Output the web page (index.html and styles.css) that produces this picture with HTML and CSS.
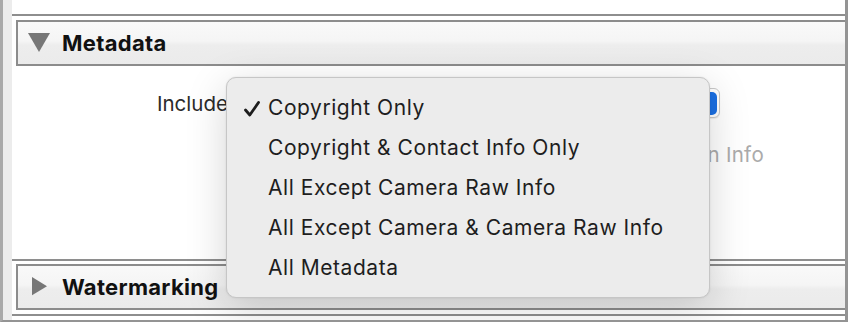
FILE: index.html
```html
<!DOCTYPE html>
<html>
<head>
<meta charset="utf-8">
<link rel="stylesheet" href="styles.css">
</head>
<body>
<div class="frame">
  <div class="content">
    <div class="top-space"></div>
    <div class="rule"></div>
    <div class="section-gap"></div>
    <div class="header">
      <svg class="tri" width="24" height="22" viewBox="0 0 24 22"><polygon points="0,1 22,1 11,20" fill="#777"/></svg>
      <span class="header-title">Metadata</span>
    </div>
    <div class="meta-body">
      <div class="include-row">
        <span class="label">Include:</span>
        <div class="popup">
          <span class="popup-text">Copyright Only</span>
          <span class="stepper"></span>
        </div>
      </div>
      <div class="check-row">
        <span class="check-item"><span class="box"></span><span class="dim">Remove Person Info</span></span>
        <span class="check-item"><span class="box"></span><span class="dim">Remove Location Info</span></span>
      </div>
    </div>
    <div class="rule"></div>
    <div class="section-gap small"></div>
    <div class="header">
      <svg class="tri tri-right" width="24" height="24" viewBox="0 0 24 24"><polygon points="0,0 0,22 18,11" fill="#777"/></svg>
      <span class="header-title">Watermarking</span>
    </div>
    <div class="section-gap"></div>
    <div class="rule"></div>

    <div class="menu">
      <div class="item">
        <svg class="check" width="18" height="18" viewBox="0 0 18 18"><path d="M2.5 10 L6.8 15 L15.5 2.5" fill="none" stroke="#1d1d1d" stroke-width="2.8" stroke-linecap="round" stroke-linejoin="round"/></svg>
        <span class="item-text">Copyright Only</span>
      </div>
      <div class="item"><span class="item-text">Copyright &amp; Contact Info Only</span></div>
      <div class="item"><span class="item-text">All Except Camera Raw Info</span></div>
      <div class="item"><span class="item-text">All Except Camera &amp; Camera Raw Info</span></div>
      <div class="item"><span class="item-text">All Metadata</span></div>
    </div>
  </div>
</div>
</body>
</html>
```

FILE: styles.css
```css
html, body {
  margin: 0;
  padding: 0;
  background: #ffffff;
}

.frame {
  width: 848px;
  height: 322px;
  box-sizing: border-box;
  display: flex;
  background: #ececec;
  border-left: 3px solid #a9a9a9;
  border-right: 3px solid #949494;
  border-bottom: 2px solid #949494;
  padding-left: 9px;
  overflow: hidden;
  font-family: Inter, "Liberation Sans", sans-serif;
}

.content {
  position: relative;
  flex: 1;
  background: #ffffff;
  display: flex;
  flex-direction: column;
}

.top-space {
  height: 14px;
}

.rule {
  height: 2px;
  background: #8e8e8e;
}

.section-gap {
  height: 4px;
}

.section-gap.small {
  height: 3px;
}

.header {
  margin-left: 4px;
  height: 42px;
  border-top: 2px solid #8c8c8c;
  border-bottom: 2px solid #8c8c8c;
  border-left: 2px solid #8c8c8c;
  background: linear-gradient(#f9f9f9 0%, #f5f5f5 45%, #ededed 55%, #ebebeb 100%);
  display: flex;
  align-items: center;
}

.tri {
  margin-left: 10px;
  width: 24px;
  flex: none;
}

.tri-right {
  margin-left: 14px;
  width: 20px;
}

.header-title {
  margin-left: 10px;
  font-weight: 700;
  font-size: 22px;
  letter-spacing: 0.3px;
  color: #111111;
}

.meta-body {
  height: 193px;
  box-sizing: border-box;
  padding-top: 22px;
  display: flex;
  flex-direction: column;
}

.include-row {
  display: flex;
  align-items: center;
  padding-left: 145px;
  height: 30px;
}

.label {
  font-size: 20.5px;
  color: #2b2b2b;
  width: 75px;
  white-space: nowrap;
}

.popup {
  width: 488px;
  height: 30px;
  box-sizing: border-box;
  border: 1px solid #c9c9c9;
  border-radius: 6px;
  background: #ffffff;
  box-shadow: 0 1px 1px rgba(0, 0, 0, 0.08);
  display: flex;
  align-items: center;
  justify-content: space-between;
  padding: 0 2px 0 10px;
}

.popup-text {
  font-size: 20px;
  color: #222;
}

.stepper {
  width: 22px;
  height: 23px;
  border-radius: 5px;
  background: #1a6fe3;
}

.check-row {
  display: flex;
  align-items: center;
  justify-content: space-between;
  width: 532px;
  padding-left: 220px;
  margin-top: 22px;
  height: 28px;
}

.check-item {
  display: flex;
  align-items: center;
  gap: 8px;
}

.box {
  width: 16px;
  height: 16px;
  border: 1px solid #d0d0d0;
  border-radius: 4px;
}

.dim {
  font-size: 20.5px;
  color: #ababab;
  letter-spacing: 0.3px;
  white-space: nowrap;
}

.menu {
  position: absolute;
  left: 214px;
  top: 77px;
  width: 484px;
  height: 221px;
  box-sizing: border-box;
  padding: 10px 0;
  background: #ececec;
  border: 1px solid #c6c6c6;
  border-radius: 10px;
  box-shadow: 0 10px 40px rgba(0, 0, 0, 0.17), 0 0 2px rgba(0, 0, 0, 0.1);
  display: flex;
  flex-direction: column;
}

.item {
  height: 40px;
  display: flex;
  align-items: center;
  position: relative;
  padding-left: 41px;
}

.check {
  position: absolute;
  left: 16px;
  top: 12px;
}

.item-text {
  font-size: 21px;
  color: #1e1e1e;
  letter-spacing: 0.55px;
  white-space: nowrap;
}
```
